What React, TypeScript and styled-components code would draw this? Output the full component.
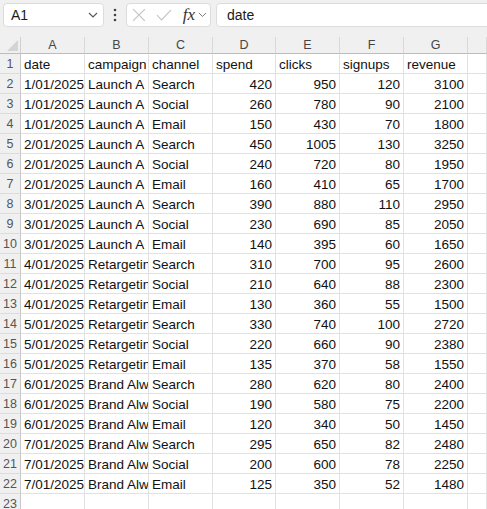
import React from "react";
import styled, { createGlobalStyle } from "styled-components";

const GlobalStyle = createGlobalStyle`
  html, body {
    margin: 0;
    padding: 0;
    background: #ffffff;
    overflow: hidden;
  }

  body {
    font-family: "Liberation Sans", Arial, sans-serif;
  }
`;

type Row = [string, string, string, number, number, number, number];

const headers = ["date", "campaign", "channel", "spend", "clicks", "signups", "revenue"];

const rows: Row[] = [
  ["1/01/2025", "Launch A", "Search", 420, 950, 120, 3100],
  ["1/01/2025", "Launch A", "Social", 260, 780, 90, 2100],
  ["1/01/2025", "Launch A", "Email", 150, 430, 70, 1800],
  ["2/01/2025", "Launch A", "Search", 450, 1005, 130, 3250],
  ["2/01/2025", "Launch A", "Social", 240, 720, 80, 1950],
  ["2/01/2025", "Launch A", "Email", 160, 410, 65, 1700],
  ["3/01/2025", "Launch A", "Search", 390, 880, 110, 2950],
  ["3/01/2025", "Launch A", "Social", 230, 690, 85, 2050],
  ["3/01/2025", "Launch A", "Email", 140, 395, 60, 1650],
  ["4/01/2025", "Retargeting", "Search", 310, 700, 95, 2600],
  ["4/01/2025", "Retargeting", "Social", 210, 640, 88, 2300],
  ["4/01/2025", "Retargeting", "Email", 130, 360, 55, 1500],
  ["5/01/2025", "Retargeting", "Search", 330, 740, 100, 2720],
  ["5/01/2025", "Retargeting", "Social", 220, 660, 90, 2380],
  ["5/01/2025", "Retargeting", "Email", 135, 370, 58, 1550],
  ["6/01/2025", "Brand Always-On", "Search", 280, 620, 80, 2400],
  ["6/01/2025", "Brand Always-On", "Social", 190, 580, 75, 2200],
  ["6/01/2025", "Brand Always-On", "Email", 120, 340, 50, 1450],
  ["7/01/2025", "Brand Always-On", "Search", 295, 650, 82, 2480],
  ["7/01/2025", "Brand Always-On", "Social", 200, 600, 78, 2250],
  ["7/01/2025", "Brand Always-On", "Email", 125, 350, 52, 1480],
];

const letters = ["A", "B", "C", "D", "E", "F", "G", ""];

function Chevron() {
  return (
    <svg width="10" height="6" viewBox="0 0 10 6">
      <path d="M1 1 L5 5 L9 1" fill="none" stroke="#555" strokeWidth="1.1" />
    </svg>
  );
}

function App() {
  return (
    <>
      <GlobalStyle />
      <Page>
        <Toolbar>
          <NameBox>
            <span>A1</span>
            <Chevron />
          </NameBox>
          <More>
            <svg width="4" height="14" viewBox="0 0 4 14">
              <circle cx="2" cy="2" r="1.3" fill="#444" />
              <circle cx="2" cy="7" r="1.3" fill="#444" />
              <circle cx="2" cy="12" r="1.3" fill="#444" />
            </svg>
          </More>
          <FxBox>
            <svg width="14" height="14" viewBox="0 0 14 14">
              <path d="M1 1 L13 13 M13 1 L1 13" stroke="#c2c2c2" strokeWidth="1.1" />
            </svg>
            <svg width="16" height="12" viewBox="0 0 16 12">
              <path d="M1 6 L5.5 11 L15 1" fill="none" stroke="#c2c2c2" strokeWidth="1.1" />
            </svg>
            <Fx>fx</Fx>
            <svg width="9" height="6" viewBox="0 0 9 6">
              <path d="M1 1 L4.5 4.5 L8 1" fill="none" stroke="#777" strokeWidth="1" />
            </svg>
          </FxBox>
          <FormulaInput>date</FormulaInput>
        </Toolbar>

        <Sheet>
          <Corner>
            <svg width="11" height="11" viewBox="0 0 11 11">
              <path d="M11 0 L11 11 L0 11 Z" fill="#d4d4d4" />
            </svg>
          </Corner>
          {letters.map((l, i) => (
            <ColHeader key={"h" + i}>{l}</ColHeader>
          ))}

          <RowHeader>1</RowHeader>
          {headers.map((h) => (
            <Cell key={h}>{h}</Cell>
          ))}
          <Cell />

          {rows.map((r, i) => (
            <React.Fragment key={i}>
              <RowHeader>{i + 2}</RowHeader>
              <Cell $align="right">{r[0]}</Cell>
              <Cell>{r[1]}</Cell>
              <Cell>{r[2]}</Cell>
              <Cell $align="right">{r[3]}</Cell>
              <Cell $align="right">{r[4]}</Cell>
              <Cell $align="right">{r[5]}</Cell>
              <Cell $align="right">{r[6]}</Cell>
              <Cell />
            </React.Fragment>
          ))}

          <RowHeader>23</RowHeader>
          {letters.map((_, i) => (
            <Cell key={"e" + i} />
          ))}
        </Sheet>
      </Page>
    </>
  );
}

const Page = styled.div`
  width: 487px;
  height: 509px;
  overflow: hidden;
`;

const Toolbar = styled.div`
  display: flex;
  align-items: flex-start;
  height: 37px;
  box-sizing: border-box;
  padding: 3px 0 0 3px;
  background: #f0f0f0;
`;

const Box = styled.div`
  display: flex;
  align-items: center;
  height: 24px;
  box-sizing: border-box;
  background: #ffffff;
  border: 1px solid #dcdcdc;
  border-radius: 4px;
`;

const NameBox = styled(Box)`
  width: 101px;
  justify-content: space-between;
  padding: 0 5px 0 7px;
  font-size: 14px;
  color: #1a1a1a;
`;

const More = styled.div`
  width: 22px;
  height: 24px;
  display: flex;
  align-items: center;
  justify-content: center;
`;

const FxBox = styled(Box)`
  width: 85px;
  padding: 0 3px 0 5px;
  gap: 9px;
  svg:nth-child(2) {
    margin-left: 1px;
  }
  svg:last-child {
    margin-left: -6px;
  }
`;

const Fx = styled.span`
  font-family: "Liberation Serif", "Times New Roman", serif;
  font-style: italic;
  font-size: 17px;
  color: #333;
  margin-left: 2px;
`;

const FormulaInput = styled(Box)`
  flex: 1;
  margin-left: 5px;
  margin-right: -6px;
  padding-left: 10px;
  font-size: 14px;
  color: #1a1a1a;
`;

const Sheet = styled.div`
  display: grid;
  grid-template-columns: 21px 64px 64px 64px 63px 64px 64px 64px 1fr;
  grid-template-rows: 17px;
  grid-auto-rows: 20px;
  background: #ffffff;
`;

const Corner = styled.div`
  background: #f0f0f0;
  border-right: 1px solid #d0d0d0;
  border-bottom: 1px solid #bcbcbc;
  display: flex;
  align-items: flex-end;
  justify-content: flex-end;
  padding: 0 2px 2px 0;
`;

const ColHeader = styled.div`
  background: #f0f0f0;
  border-right: 1px solid #d8d8d8;
  border-bottom: 1px solid #bcbcbc;
  text-align: center;
  font-size: 12.5px;
  line-height: 16px;
  color: #454545;
`;

const RowHeader = styled.div`
  background: #f0f0f0;
  border-right: 1px solid #c8c8c8;
  border-bottom: 1px solid #dcdcdc;
  text-align: center;
  font-size: 12.5px;
  line-height: 21px;
  color: #555;
  overflow: hidden;
`;

const Cell = styled.div<{ $align?: "left" | "right" }>`
  border-right: 1px solid #e1e1e1;
  border-bottom: 1px solid #e1e1e1;
  padding: 0 3px;
  font-size: 13.5px;
  line-height: 21px;
  color: #111;
  white-space: nowrap;
  overflow: hidden;
  text-align: ${(p) => p.$align ?? "left"};
`;

export default App;
